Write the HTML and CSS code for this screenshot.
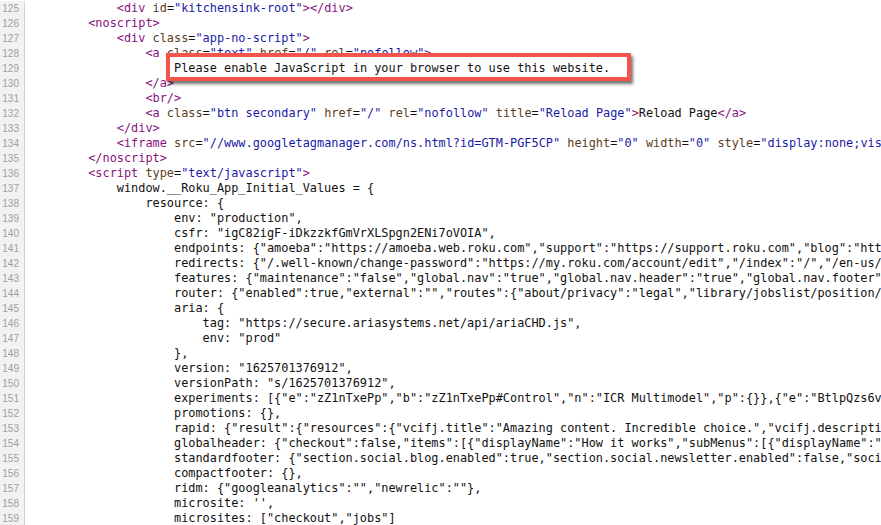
FILE: index.html
```html
<!DOCTYPE html>
<html lang="en">
<head>
    <meta charset="UTF-8">
    <meta name="viewport" content="width=device-width, initial-scale=1.0">
    <title>view-source</title>
    <link rel="stylesheet" href="styles.css">
</head>
<body>

    <div class="source">
        <!-- highlighted noscript message -->
        <div class="callout"></div>

        <div class="line"><span class="num">125</span><span class="code">            <span class="t">&lt;div</span> <span class="an">id</span>=<span class="av">"kitchensink-root"</span><span class="t">&gt;&lt;/div&gt;</span></span></div>
        <div class="line"><span class="num">126</span><span class="code">        <span class="t">&lt;noscript&gt;</span></span></div>
        <div class="line"><span class="num">127</span><span class="code">            <span class="t">&lt;div</span> <span class="an">class</span>=<span class="av">"app-no-script"</span><span class="t">&gt;</span></span></div>
        <div class="line"><span class="num">128</span><span class="code">                <span class="t">&lt;a</span> <span class="an">class</span>=<span class="av">"text"</span> <span class="an">href</span>=<span class="av">"/"</span> <span class="an">rel</span>=<span class="av">"nofollow"</span><span class="t">&gt;</span></span></div>
        <div class="line"><span class="num">129</span><span class="code">                    <span class="over">Please enable JavaScript in your browser to use this website.</span></span></div>
        <div class="line"><span class="num">130</span><span class="code">                <span class="t">&lt;/a&gt;</span></span></div>
        <div class="line"><span class="num">131</span><span class="code">                <span class="t">&lt;br/&gt;</span></span></div>
        <div class="line"><span class="num">132</span><span class="code">                <span class="t">&lt;a</span> <span class="an">class</span>=<span class="av">"btn secondary"</span> <span class="an">href</span>=<span class="av">"/"</span> <span class="an">rel</span>=<span class="av">"nofollow"</span> <span class="an">title</span>=<span class="av">"Reload Page"</span><span class="t">&gt;</span>Reload Page<span class="t">&lt;/a&gt;</span></span></div>
        <div class="line"><span class="num">133</span><span class="code">            <span class="t">&lt;/div&gt;</span></span></div>
        <div class="line"><span class="num">134</span><span class="code">            <span class="t">&lt;iframe</span> <span class="an">src</span>=<span class="av">"//www.googletagmanager.com/ns.html?id=GTM-PGF5CP"</span> <span class="an">height</span>=<span class="av">"0"</span> <span class="an">width</span>=<span class="av">"0"</span> <span class="an">style</span>=<span class="av">"display:none;visibility:hidden"</span><span class="t">&gt;&lt;/iframe&gt;</span></span></div>
        <div class="line"><span class="num">135</span><span class="code">        <span class="t">&lt;/noscript&gt;</span></span></div>
        <div class="line"><span class="num">136</span><span class="code">        <span class="t">&lt;script</span> <span class="an">type</span>=<span class="av">"text/javascript"</span><span class="t">&gt;</span></span></div>
        <div class="line"><span class="num">137</span><span class="code">            window.__Roku_App_Initial_Values = {</span></div>
        <div class="line"><span class="num">138</span><span class="code">                resource: {</span></div>
        <div class="line"><span class="num">139</span><span class="code">                    env: "production",</span></div>
        <div class="line"><span class="num">140</span><span class="code">                    csfr: "igC82igF-iDkzzkfGmVrXLSpgn2ENi7oVOIA",</span></div>
        <div class="line"><span class="num">141</span><span class="code">                    endpoints: {"amoeba":"https://amoeba.web.roku.com","support":"https://support.roku.com","blog":"https://blog.roku.com"},</span></div>
        <div class="line"><span class="num">142</span><span class="code">                    redirects: {"/.well-known/change-password":"https://my.roku.com/account/edit","/index":"/","/en-us/":"/"},</span></div>
        <div class="line"><span class="num">143</span><span class="code">                    features: {"maintenance":"false","global.nav":"true","global.nav.header":"true","global.nav.footer":"true"},</span></div>
        <div class="line"><span class="num">144</span><span class="code">                    router: {"enabled":true,"external":"","routes":{"about/privacy":"legal","library/jobslist/position/":"jobs"}},</span></div>
        <div class="line"><span class="num">145</span><span class="code">                    aria: {</span></div>
        <div class="line"><span class="num">146</span><span class="code">                        tag: "https://secure.ariasystems.net/api/ariaCHD.js",</span></div>
        <div class="line"><span class="num">147</span><span class="code">                        env: "prod"</span></div>
        <div class="line"><span class="num">148</span><span class="code">                    },</span></div>
        <div class="line"><span class="num">149</span><span class="code">                    version: "1625701376912",</span></div>
        <div class="line"><span class="num">150</span><span class="code">                    versionPath: "s/1625701376912",</span></div>
        <div class="line"><span class="num">151</span><span class="code">                    experiments: [{"e":"zZ1nTxePp","b":"zZ1nTxePp#Control","n":"ICR Multimodel","p":{}},{"e":"BtlpQzs6v","b":"BtlpQzs6v#Control"}],</span></div>
        <div class="line"><span class="num">152</span><span class="code">                    promotions: {},</span></div>
        <div class="line"><span class="num">153</span><span class="code">                    rapid: {"result":{"resources":{"vcifj.title":"Amazing content. Incredible choice.","vcifj.description":""}}},</span></div>
        <div class="line"><span class="num">154</span><span class="code">                    globalheader: {"checkout":false,"items":[{"displayName":"How it works","subMenus":[{"displayName":"Overview"}]}]},</span></div>
        <div class="line"><span class="num">155</span><span class="code">                    standardfooter: {"section.social.blog.enabled":true,"section.social.newsletter.enabled":false,"social":{}},</span></div>
        <div class="line"><span class="num">156</span><span class="code">                    compactfooter: {},</span></div>
        <div class="line"><span class="num">157</span><span class="code">                    ridm: {"googleanalytics":"","newrelic":""},</span></div>
        <div class="line"><span class="num">158</span><span class="code">                    microsite: '',</span></div>
        <div class="line"><span class="num">159</span><span class="code">                    microsites: ["checkout","jobs"]</span></div>
    </div>

</body>
</html>
```

FILE: styles.css
```css
* {
    box-sizing: border-box;
    margin: 0;
    padding: 0;
}

body {
    background-color: #fff;
    overflow: hidden;
}

.source {
    position: relative;
    width: 881px;
    height: 525px;
    padding-top: 1px;
    overflow: hidden;
}

.line {
    display: flex;
    height: 15px;
    line-height: 15px;
}

.num {
    flex: 0 0 25px;
    padding-right: 5px;
    text-align: right;
    background-color: #f2f2f2;
    border-right: 1px solid #d4d4d4;
    color: #a0a0a0;
    font-family: "Liberation Sans", Arial, sans-serif;
    font-size: 10px;
}

.code {
    padding-left: 6px;
    white-space: pre;
    color: #111;
    font-family: "DejaVu Sans Mono", monospace;
    font-size: 11.88px;
}

.t {
    color: #881280;
}

.an {
    color: #5c3d1e;
}

.av {
    color: #1a1aa6;
}

/* red frame drawn on top of lines 128-130 */
.callout {
    position: absolute;
    left: 166px;
    top: 53px;
    width: 465px;
    height: 28px;
    border: 4px solid #f2554b;
    background-color: #fff;
    box-shadow: 2px 3px 3px rgba(0, 0, 0, 0.55);
    z-index: 1;
}

.over {
    position: relative;
    z-index: 2;
}
```
